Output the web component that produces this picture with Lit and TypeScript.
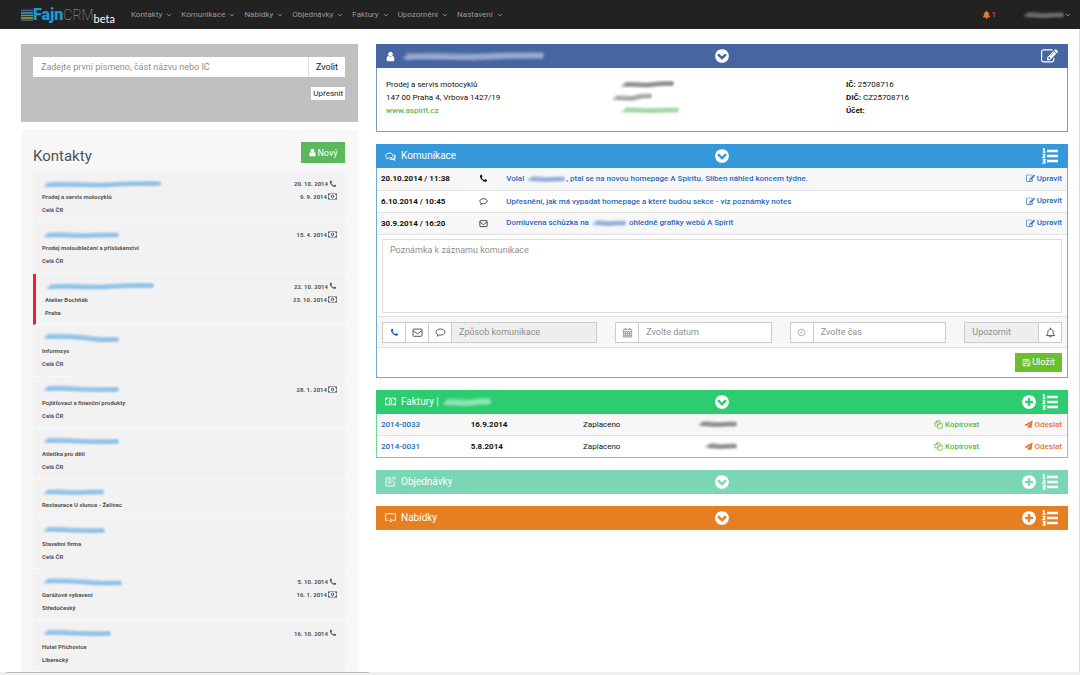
import { LitElement, html, css, svg, nothing } from "lit";
import { customElement } from "lit/decorators.js";
import { classMap } from "lit/directives/class-map.js";

const DISC =
  "q0 209-103 385.5t-279.5 279.5-385.5 103-385.5-103-279.5-279.5-103-385.5 103-385.5 279.5-279.5 385.5-103 385.5 103 279.5 279.5 103 385.5z";

/* Solid glyphs: viewBox width, path. */
const SOLID: Record<string, [number, string]> = {
  phone: [1792, "M1600 1240q0 27-10 70.5t-21 68.5q-21 50-122 106-94 51-186 51-27 0-53-3.5t-57.5-12.5-47-14.5-55.5-20.5-49-18q-98-35-175-83-127-79-264-216t-216-264q-48-77-83-175-3-9-18-49t-20.5-55.5-14.5-47-12.5-57.5-3.5-53q0-92 51-186 56-101 106-122 25-11 68.5-21t70.5-10q14 0 21 3 18 6 53 76 11 19 30 54t35 63.5 31 53.5q3 4 17.5 25t21.5 35.5 7 28.5q0 20-28.5 50t-62 55-62 53-28.5 46q0 9 5 22.5t8.5 20.5 14 24 11.5 19q76 137 174 235t235 174q2 1 19 11.5t24 14 20.5 8.5 22.5 5q18 0 46-28.5t53-62 55-62 50-28.5q14 0 28.5 7t35.5 21.5 25 17.5q25 15 53.5 31t63.5 35 54 30q70 35 76 53 3 7 3 21z"],
  user: [1792, "M1536 1399q0 109-62.5 187t-150.5 78h-854q-88 0-150.5-78t-62.5-187q0-85 8.5-160.5t31.5-152 58.5-131 94-89 134.5-34.5q131 128 313 128t313-128q76 0 134.5 34.5t94 89 58.5 131 31.5 152 8.5 160.5zm-256-887q0 159-112.5 271.5t-271.5 112.5-271.5-112.5-112.5-271.5 112.5-271.5 271.5-112.5 271.5 112.5 112.5 271.5z"],
  chevron: [1792, "M941 1299l454-454q19-19 19-45t-19-45l-102-102q-19-19-45-19t-45 19l-307 307-307-307q-19-19-45-19t-45 19l-102 102q-19 19-19 45t19 45l454 454q19 19 45 19t45-19zm723-403" + DISC],
  plus: [1792, "M1344 960v-128q0-26-19-45t-45-19h-256v-256q0-26-19-45t-45-19h-128q-26 0-45 19t-19 45v256h-256q-26 0-45 19t-19 45v128q0 26 19 45t45 19h256v256q0 26 19 45t45 19h128q26 0 45-19t19-45v-256h256q26 0 45-19t19-45zm320-64" + DISC],
  edit: [1792, "M888 1184l116-116-152-152-116 116v56h96v96h56zm440-720q-16-16-33 1l-350 350q-17 17-1 33t33-1l350-350q17-17 1-33zm80 594v190q0 119-84.5 203.5t-203.5 84.5h-832q-119 0-203.5-84.5t-84.5-203.5v-832q0-119 84.5-203.5t203.5-84.5h832q63 0 117 25 15 7 18 23 3 17-9 29l-49 49q-14 14-32 8-23-6-45-6h-832q-66 0-113 47t-47 113v832q0 66 47 113t113 47h832q66 0 113-47t47-113v-126q0-13 9-22l64-64q15-15 35-7t20 29zm-96-738l288 288-672 672h-288v-288zm444 132l-92 92-288-288 92-92q28-28 68-28t68 28l152 152q28 28 28 68t-28 68z"],
  money: [1920, "M768 1152h384v-96h-128v-448h-114l-148 137 77 80q42-37 55-57h2v288h-128v96zm512-256q0 70-21 142t-59.5 134-101.5 101-138 39-138-39-101.5-101-59.5-134-21-142 21-142 59.5-134 101.5-101 138-39 138 39 101.5 101 59.5 134 21 142zm512 256v-512q-106 0-181-75t-75-181h-1152q0 106-75 181t-181 75v512q106 0 181 75t75 181h1152q0-106 75-181t181-75zm128-832v1152q0 26-19 45t-45 19h-1792q-26 0-45-19t-19-45v-1152q0-26 19-45t45-19h1792q26 0 45 19t19 45z"],
};

/* Line-drawn glyphs on a 16 unit grid. */
const LINE: Record<string, unknown> = {
  comment: svg`<path d="M8 3C4.4 3 1.5 4.9 1.5 7.4c0 1.5 1 2.8 2.6 3.5-.1.9-.6 1.700-1.300 2.300 1.500-.1 2.800-.7 3.700-1.500.5.1 1 .1 1.500.1 3.600 0 6.500-1.900 6.500-4.400S11.600 3 8 3z"/>`,
  comments: svg`<path d="M6.500 3C3.500 3 1.200 4.600 1.200 6.600c0 1.200.8 2.200 2 2.900l-.9 1.700c1.100-.1 2-.5 2.700-1.100l1.500.1c3 0 5.300-1.600 5.300-3.600S9.500 3 6.500 3z"/><path stroke-width="1.800" d="M13.200 5.800c1 .6 1.600 1.500 1.600 2.500 0 1.200-.8 2.200-2 2.900l.9 1.700c-1.100-.1-2-.5-2.700-1.100-1.500.2-3 0-4.200-.6"/>`,
  envelope: svg`<rect x="1.500" y="3" width="13" height="10.500" rx="1"/><path d="M1.800 5.500 8 10l6.200-4.500"/>`,
  calendar: svg`<path d="M2 3.500h12v11H2zM2 6.500h12M2 9.200h12M2 11.900h12M5 6.500v8M8 6.500v8M11 6.500v8"/><path stroke-width="2" d="M5 1.500v3M11 1.500v3"/>`,
  clock: svg`<circle cx="8" cy="8" r="6"/><path d="M8.600 4.500v4H5.500"/>`,
  bell: svg`<path d="M2 12.500c1.700-1.500 2.200-3.300 2.200-5.500C4.200 4.700 5.700 3.200 8 3.200S11.800 4.700 11.800 7c0 2.200.5 4 2.200 5.500zM8 1v2M6.500 13c0 1 .7 1.700 1.500 1.700s1.500-.7 1.500-1.700"/>`,
  bellFull: svg`<path fill="currentColor" d="M2 12.500c1.700-1.500 2.200-3.300 2.200-5.500C4.200 4.700 5.700 3.200 8 3.200S11.800 4.700 11.800 7c0 2.200.5 4 2.200 5.500zM8 1v2M7 13h2v1.500H7z"/>`,
  save: svg`<path d="M2 2.500h9.500L14 5v9H2zM4.500 14V9.500h7V14M5 2.500v4h5.500v-4M8.500 3.500v2"/>`,
  copy: svg`<path d="M6 5V1.500h4.500v4M6 10.500H1.500V5L5 1.500h1M1.500 5H5V1.500M6.500 8.500v6h8v-9H9.500zM6.500 8.500h3v-3"/>`,
  send: svg`<path fill="currentColor" stroke="none" d="M15.500.5 13 14.500l-4.200-1.800L6.500 15.500v-4L13 4 5 10.800.5 9z"/>`,
  screen: svg`<path d="M4.500 12H.8V2.500h14.400V12H11M8.500 9.500v4M6.500 12.500l2 2 2-2"/>`,
  note: svg`<path d="M13.500 8v6.500H1.500v-12h7M5.500 11l.8-3L13.500.8l1.800 1.800L8.200 10zM4 5h3M4 7.500h1.500"/>`,
  list: svg`<path stroke-width="2.700" d="M5 3H16M5 8H16M5 13H16"/><path stroke-width="1.300" d="M.8 1.200 2 .6v3.400M.6 4.200h3M.7 6.700c.8-.8 2.400-.5 2.200.5-.2.800-1.500 1.200-2.200 2.300h2.700M.7 11.600h2.500L1.800 13c1.900 0 1.800 2.500-.1 2.300-.5 0-.9-.2-1.200-.5"/>`,
  angle: svg`<path stroke-width="2.200" d="M2.500 5 8 10.500 13.500 5"/>`,
};

const icon = (name: string, size = "s8") => {
  const solid = SOLID[name];
  return solid
    ? html`<svg class="icon ${size}" viewBox="0 0 ${solid[0]} 1792" aria-hidden="true"><path fill="currentColor" d=${solid[1]}/></svg>`
    : html`<svg class="icon ${size}" viewBox="0 0 16 16" fill="none" stroke="currentColor" stroke-width="1.300" aria-hidden="true">${LINE[name]}</svg>`;
};

/* A brushed-over private value: a soft broad stroke with a darker streak in it. */
const smudge = (width: number, tone: string, lean = 0) => {
  const w = width;
  const a = 5 + lean;
  const b = 5 - lean;
  return html`<svg class="smudge ${tone}" width=${w} height="10" viewBox="0 0 ${w} 10" aria-hidden="true">
    <path class="soft" d="M5 ${a}L${w * 0.25} ${a - 0.5}L${w * 0.5} ${a + 0.5}L${w * 0.75} ${b}L${w - 2} ${b}"/>
    <path class="streak" d="M2 ${a + 1.500}L${w * 0.12} ${a}L${w * 0.4} ${a + 1}L${w * 0.7} ${b + 0.5}L${w - 1} ${b}"/>
  </svg>`;
};

const shared = css`
  :host {
    display: block;
    box-sizing: border-box;
    font-family: Roboto, "Liberation Sans", sans-serif;
  }
  *, *::before, *::after { box-sizing: border-box; }
  button, input, textarea { font: inherit; color: inherit; margin: 0; border-radius: 0; outline: none; }
  button { cursor: pointer; }
  a { text-decoration: none; color: inherit; }
  .icon { display: inline-block; flex: none; vertical-align: middle; }
  .s5 { width: 6px; height: 6px; }
  .s8 { width: 9px; height: 9px; }
  .s10 { width: 11px; height: 11px; }
  .s16 { width: 16px; height: 16px; }
  .s18 { width: 17px; height: 17px; }
  .smudge { display: inline-block; vertical-align: middle; overflow: visible; fill: none; stroke-linejoin: round; stroke-linecap: butt; }
  .smudge .soft { stroke-width: 5; opacity: 0.5; filter: blur(0.9px); }
  .smudge .streak { stroke-width: 3; opacity: 0.5; filter: blur(0.8px); }
  .smudge.light .soft, .smudge.pale .soft { stroke-width: 7; }
  .blue { stroke: #69b0e6; }
  .light { stroke: #b9c6e4; }
  .pale { stroke: #b4efcb; }
  .ink { stroke: #666; }
  .link { stroke: #6d94d4; }
  .green { stroke: #7cc880; }
  .dim { stroke: #888; }
`;

@customElement("crm-navbar")
export class CrmNavbar extends LitElement {
  static styles = [shared, css`
    .bar { display: flex; align-items: center; height: 29px; padding: 0 9px 0 21px; background: #222; color: #999; font-size: 8px; }
    .logo { display: flex; align-items: center; margin-right: 16px; line-height: 16px; }
    .stripes { width: 12px; height: 12px; }
    .fajn { color: #189ad8; font-size: 16px; font-weight: 900; }
    .crm { color: #aaa; font-size: 14px; font-weight: 100; }
    .beta { margin-top: 9px; color: #fff; font-family: Lato, sans-serif; font-size: 11px; line-height: 10px; }
    .menu { display: flex; gap: 9px; flex: 1; }
    .item { display: flex; align-items: center; gap: 4px; line-height: 12px; }
    .account { display: flex; align-items: center; gap: 26px; }
    .alert { display: flex; align-items: center; gap: 1px; color: #e67e22; }
    .user { display: flex; align-items: center; }
  `];

  render() {
    const items = ["Kontakty", "Komunikace", "Nabídky", "Objednávky", "Faktury", "Upozornění", "Nastavení"];
    return html`<header class="bar">
      <a class="logo" href="#" aria-label="FajnCRM beta">
        <svg class="stripes" viewBox="0 0 12 12" fill="none" stroke-width="1.500">
          <path stroke="#4b5fa6" d="M0 1.500h12"/><path stroke="#2fa3dc" d="M0 4h12"/><path stroke="#37b26b" d="M0 6.500h12"/><path stroke="#b9a53c" d="M0 9h12"/><path stroke="#44688f" d="M0 11.200h12"/>
        </svg>
        <span class="fajn">Fajn</span><span class="crm">CRM</span><span class="beta">beta</span>
      </a>
      <nav class="menu">${items.map((t) => html`<a class="item" href="#">${t}${icon("angle", "s5")}</a>`)}</nav>
      <div class="account">
        <a class="alert" href="#">${icon("bellFull")}<span>1</span></a>
        <a class="user" href="#" aria-label="Účet">${smudge(43, "dim")}${icon("angle", "s5")}</a>
      </div>
    </header>`;
  }
}

@customElement("crm-search")
export class CrmSearch extends LitElement {
  static styles = [shared, css`
    .box { display: flex; flex-direction: column; align-items: flex-end; gap: 10px; height: 78px; padding: 13px 13px 0 12px; background: #c0c0c0; font-size: 8px; color: #222; }
    .line { display: flex; align-self: stretch; height: 20px; font-size: 9px; }
    .field { flex: 1; min-width: 0; padding: 0 8px; border: 0; background: #fff; }
    .field::placeholder { color: #8f8f8f; opacity: 1; }
    .pick { width: 37px; padding: 0; border: 0; border-left: 1px solid #ddd; background: #fff; }
    .more { height: 13px; padding: 0 2px; border: 0; background: #fff; }
  `];

  render() {
    return html`<form class="box">
      <div class="line">
        <input class="field" type="text" aria-label="Hledat kontakt" placeholder="Zadejte první písmeno, část názvu nebo IČ">
        <button class="pick" type="button">Zvolit</button>
      </div>
      <button class="more" type="button">Upřesnit</button>
    </form>`;
  }
}

interface Contact {
  name: number;
  lean: number;
  lines: string[];
  call?: string;
  paid?: string;
  active?: boolean;
}

const CONTACTS: Contact[] = [
  { name: 120, lean: 0.5, lines: ["Prodej a servis motocyklů", "Celá ČR"], call: "20. 10. 2014", paid: "9. 9. 2014" },
  { name: 78, lean: 0, lines: ["Prodej motooblečení a příslušenství", "Celá ČR"], paid: "15. 4. 2014" },
  { name: 110, lean: 0.5, lines: ["Atelier Bochňák", "Praha"], call: "22. 10. 2014", paid: "23. 10. 2014", active: true },
  { name: 78, lean: -1.5, lines: ["Informsys", "Celá ČR"] },
  { name: 78, lean: -0.5, lines: ["Pojišťovací a finanční produkty", "Celá ČR"], paid: "28. 1. 2014" },
  { name: 78, lean: -0.5, lines: ["Atletika pro děti", "Celá ČR"] },
  { name: 63, lean: 0, lines: ["Restaurace U slunce - Želivec"] },
  { name: 64, lean: -0.5, lines: ["Stavební firma", "Celá ČR"] },
  { name: 81, lean: -1, lines: ["Garážové vybavení", "Středočeský"], call: "5. 10. 2014", paid: "16. 1. 2014" },
  { name: 70, lean: -0.5, lines: ["Hotel Příchovice", "Liberecký"], call: "16. 10. 2014" },
];

@customElement("crm-contacts")
export class CrmContacts extends LitElement {
  static styles = [shared, css`
    :host { display: flex; flex-direction: column; padding: 12px 13px 0 12px; background: #f7f7f7; }
    .head { display: flex; justify-content: space-between; align-items: center; height: 21px; margin-bottom: 8px; }
    .title { margin: 0; padding-top: 7px; color: #4d535b; font-size: 15px; font-weight: 400; line-height: 20px; }
    .new { display: flex; align-items: center; justify-content: center; width: 44px; height: 21px; padding: 0; border: 0; background: #5cb85c; color: #fff; font-size: 9px; }
    .list { display: flex; flex: 1; flex-direction: column; margin: 0; padding: 0; list-style: none; }
    .row { display: flex; flex: 1 0 auto; justify-content: space-between; padding: 6px 8px 5px 9px; border-bottom: 1px solid #f9f9f9; background: #f2f2f2; color: #555; font-size: 6px; font-weight: 700; line-height: 13px; }
    .active { border-left: 3px solid #e8203a; }
    .line { display: flex; align-items: center; height: 13px; }
    .dates { display: flex; flex-direction: column; align-items: flex-end; }
    .date { display: flex; align-items: center; gap: 1px; height: 13px; }
    .date .s5 { width: 8px; height: 8px; }
  `];

  render() {
    return html`<div class="head">
        <h2 class="title">Kontakty</h2>
        <button class="new" type="button">${icon("user")}Nový</button>
      </div>
      <ul class="list">${CONTACTS.map((c) => html`
        <li class=${classMap({ row: true, active: !!c.active })}>
          <div>
            <a class="line" href="#" aria-label=${c.lines[0]}>${smudge(c.name, "blue", c.lean)}</a>
            ${c.lines.map((l) => html`<div class="line">${l}</div>`)}
          </div>
          <div class="dates">
            ${c.call ? html`<span class="date">${c.call}${icon("phone", "s5")}</span>` : nothing}
            ${c.paid ? html`<span class="date">${c.paid}${icon("money")}</span>` : nothing}
          </div>
        </li>`)}
      </ul>`;
  }
}

@customElement("crm-detail")
export class CrmDetail extends LitElement {
  static styles = [shared, css`
    :host { display: flex; flex-direction: column; gap: 12px; color: #111; font-size: 8px; }
    .panel { border: 1px solid; background: #fff; }
    .head { display: grid; grid-template-columns: 1fr auto 1fr; align-items: center; height: 24px; margin: -1px; padding: 0 10px 0 9px; color: #fff; }
    .title { display: flex; align-items: center; gap: 5px; margin: 0; font-size: 10px; font-weight: 400; line-height: 14px; }
    .tools { display: flex; justify-content: flex-end; gap: 5px; }
    .tool { display: flex; padding: 0; border: 0; background: none; color: inherit; }
    .company { border-color: #7f97c4; }
    .company .head { background: #4765a0; }
    .talk { border-color: #6fa9d4; }
    .talk .head { background: #3498db; }
    .bills { border-color: #6fd69a; }
    .bills .head { background: #2ecc71; }
    .orders { border-color: #7bd6b4; }
    .orders .head { background: #7bd6b4; }
    .offers { border-color: #e67e22; }
    .offers .head { background: #e67e22; }

    .facts { display: grid; grid-template-columns: repeat(3, 1fr); padding: 11px 0 14px; line-height: 13px; }
    .fact { padding: 0 9px; }
    .private { display: flex; flex-direction: column; align-items: flex-start; gap: 3px; padding: 1px 13px; }
    .private .smudge:nth-child(2) { margin-left: -9px; }
    .site { color: #5cb85c; font-weight: 500; }

    .table { width: 100%; margin-top: 1px; border-collapse: collapse; table-layout: fixed; }
    .table tr { height: 22px; border-bottom: 1px solid #e2e2e2; }
    .table tr:nth-child(odd) { background: #f7f7f7; }
    .bills .table tr:last-child { height: 21px; border-bottom: 0; }
    .table td { padding: 0 5px 0 4px; white-space: nowrap; }
    .table .mid { padding: 0; text-align: center; }
    .table .text { padding-left: 12px; }
    .table .state { padding-left: 6px; }
    .table .end { text-align: right; }
    .c-when { width: 14%; }
    .c-kind { width: 3%; }
    .c-edit { width: 10%; }
    .c-num { width: 13%; }
    .c-date { width: 16%; }
    .c-state { width: 15%; }
    .c-sum { width: 9%; }
    .c-copy { width: 35%; }
    .c-send { width: 12%; }
    .strong { font-weight: 700; }
    .act { color: #2a67c5; font-weight: 500; }
    .num { color: #2a67c5; font-weight: 500; }
    .copy { color: #67b82f; font-weight: 500; }
    .send { color: #e8742c; font-weight: 500; }

    .note { padding: 4px 5px 3px; }
    .area { display: block; width: 100%; height: 74px; padding: 4px 7px; border: 1px solid #ddd; resize: none; font-size: 9px; line-height: 12px; background: #fff; }
    .area::placeholder, .input::placeholder { color: #8f8f8f; opacity: 1; }
    .form { display: grid; grid-template-columns: 216fr 157fr 157fr 98fr; gap: 18px; padding: 5px 5px 4px; border-top: 1px solid #e2e2e2; border-bottom: 1px solid #e2e2e2; background: #f7f7f7; font-size: 9px; }
    .group { display: flex; height: 21px; border: 1px solid #ccc; background: #fff; color: #444; }
    .addon { display: flex; align-items: center; justify-content: center; width: 23px; padding: 0; border: 0; border-right: 1px solid #ccc; background: #fff; color: #444; }
    .muted { color: #999; }
    .chosen { color: #1566c0; }
    .last { border-right: 0; border-left: 1px solid #ccc; }
    .input { flex: 1; min-width: 0; width: 0; padding: 0 7px; border: 0; background: #fff; }
    .input:disabled { background: #eee; }
    .foot { display: flex; justify-content: flex-end; padding: 5px; }
    .save { display: flex; align-items: center; justify-content: center; gap: 1px; width: 47px; height: 19px; padding: 0; border: 0; background: #6cbf2c; color: #fff; font-size: 9px; }
  `];

  private head(glyph: string, title: unknown, tools: [string, string][]) {
    return html`<div class="head">
      <h2 class="title">${icon(glyph, "s10")}${title}</h2>
      <button class="tool" type="button" aria-label="Sbalit">${icon("chevron", "s16")}</button>
      <div class="tools">${tools.map(([name, label]) => html`<button class="tool" type="button" aria-label=${label}>${icon(name, name === "edit" ? "s18" : "s16")}</button>`)}</div>
    </div>`;
  }

  render() {
    const addAndList: [string, string][] = [["plus", "Přidat"], ["list", "Seznam"]];
    const talks: [string, string, unknown][] = [
      ["20.10.2014 / 11:38", "phone", html`Volal ${smudge(40, "link")}, ptal se na novou homepage A Spiritu. Slíben náhled koncem týdne.`],
      ["6.10.2014 / 10:45", "comment", "Upřesnění, jak má vypadat homepage a které budou sekce - viz poznámky notes"],
      ["30.9.2014 / 16:20", "envelope", html`Domluvena schůzka na ${smudge(36, "link")} ohledně grafiky webů A Spirit`],
    ];
    const bills: [string, string, number][] = [["2014-0033", "16.9.2014", 41], ["2014-0031", "5.8.2014", 34]];
    return html`
      <section class="panel company">
        ${this.head("user", smudge(144, "light", 0.5), [["edit", "Upravit"]])}
        <div class="facts">
          <div class="fact">
            <div>Prodej a servis motocyklů</div>
            <div>147 00 Praha 4, Vrbova 1427/19</div>
            <a class="site" href="#">www.aspirit.cz</a>
          </div>
          <div class="fact private">${smudge(55, "ink", 0.5)}${smudge(42, "dim", 1)}${smudge(60, "green")}</div>
          <div class="fact">
            <div><b>IČ:</b> 25708716</div>
            <div><b>DIČ:</b> CZ25708716</div>
            <div><b>Účet:</b></div>
          </div>
        </div>
      </section>

      <section class="panel talk">
        ${this.head("comments", "Komunikace", [["list", "Seznam"]])}
        <table class="table">
          <colgroup><col class="c-when"><col class="c-kind"><col><col class="c-edit"></colgroup>
          <tbody>${talks.map(([when, kind, text]) => html`<tr>
            <td class="strong">${when}</td>
            <td class="mid">${icon(kind)}</td>
            <td class="text"><a class="act" href="#">${text}</a></td>
            <td class="end"><a class="act" href="#">${icon("edit")} Upravit</a></td>
          </tr>`)}</tbody>
        </table>
        <div class="note"><textarea class="area" aria-label="Poznámka" placeholder="Poznámka k záznamu komunikace"></textarea></div>
        <div class="form">
          <div class="group">
            <button class="addon chosen" type="button" aria-label="Telefon">${icon("phone")}</button>
            <button class="addon" type="button" aria-label="E-mail">${icon("envelope", "s10")}</button>
            <button class="addon" type="button" aria-label="Zpráva">${icon("comment", "s10")}</button>
            <input class="input" type="text" disabled aria-label="Způsob komunikace" placeholder="Způsob komunikace">
          </div>
          <label class="group"><span class="addon muted">${icon("calendar", "s10")}</span><input class="input" type="text" aria-label="Datum" placeholder="Zvolte datum"></label>
          <label class="group"><span class="addon muted">${icon("clock")}</span><input class="input" type="text" aria-label="Čas" placeholder="Zvolte čas"></label>
          <div class="group">
            <input class="input" type="text" disabled aria-label="Upozornit" placeholder="Upozornit">
            <button class="addon last" type="button" aria-label="Upozornění">${icon("bell", "s10")}</button>
          </div>
        </div>
        <div class="foot"><button class="save" type="button">${icon("save")}Uložit</button></div>
      </section>

      <section class="panel bills">
        ${this.head("money", html`<span>Faktury | ${smudge(51, "pale", 0.5)}</span>`, addAndList)}
        <table class="table">
          <colgroup><col class="c-num"><col class="c-date"><col class="c-state"><col class="c-sum"><col class="c-copy"><col class="c-send"></colgroup>
          <tbody>${bills.map(([num, date, sum]) => html`<tr>
            <td><a class="num" href="#">${num}</a></td>
            <td class="strong">${date}</td>
            <td class="state">Zaplaceno</td>
            <td class="end">${smudge(sum, "ink")}</td>
            <td class="end"><a class="copy" href="#">${icon("copy")} Kopírovat</a></td>
            <td class="end"><a class="send" href="#">${icon("send")} Odeslat</a></td>
          </tr>`)}</tbody>
        </table>
      </section>

      <section class="panel orders">${this.head("note", "Objednávky", addAndList)}</section>
      <section class="panel offers">${this.head("screen", "Nabídky", addAndList)}</section>
    `;
  }
}

@customElement("app-root")
export class AppRoot extends LitElement {
  static styles = [shared, css`
    :host { display: flex; flex-direction: column; min-height: 100vh; background: #fff; }
    .page { display: grid; flex: 1; grid-template-columns: 337fr 692fr; gap: 18px; padding: 15px 11px 0 21px; border-right: 1px solid #ddd; }
    .side { display: flex; flex-direction: column; gap: 8px; }
    .side crm-contacts { flex: 1; }
    .edge { display: grid; grid-template-columns: 369fr 711fr; height: 3px; background: #f0f0f0; }
    .thumb { margin-left: 6px; border-top: 1px solid #bbb; }
  `];

  render() {
    return html`
      <crm-navbar></crm-navbar>
      <main class="page">
        <div class="side"><crm-search></crm-search><crm-contacts></crm-contacts></div>
        <crm-detail></crm-detail>
      </main>
      <div class="edge"><div class="thumb"></div></div>
    `;
  }
}
